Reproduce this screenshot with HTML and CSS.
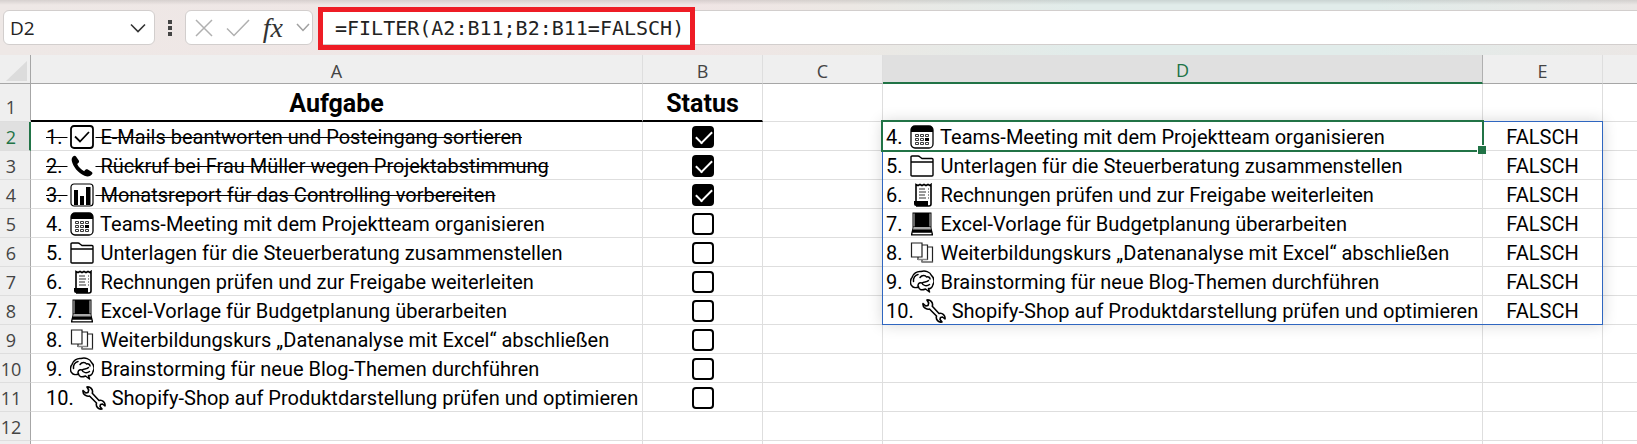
FILE: index.html
```
<!DOCTYPE html>
<html lang="de">
<head>
    <meta charset="UTF-8">
    <meta name="viewport" content="width=device-width, initial-scale=1.0">
    <title>Aufgabenliste mit FILTER</title>
    <link rel="stylesheet" href="styles.css">
</head>
<body>
    <!-- Icons für die Aufgaben -->
    <svg class="sprite" aria-hidden="true">
        <symbol id="i-check" viewBox="0 0 24 24">
            <rect x="1" y="1" width="22" height="22" rx="3" fill="none" stroke="#000" stroke-width="1.8"/>
            <path d="M5 11.500l5 5L19 7" fill="none" stroke="#000" stroke-width="1.8"/>
        </symbol>
        <symbol id="i-phone" viewBox="0 0 24 24">
            <path d="M3 2.500C4 1.500 5.500 1.500 6 2.500L8.800 6.500C9.500 7.700 9 8.500 7.200 10C8.500 13 11 15.500 14.200 17.200C15.500 15.300 16.500 15 17.800 15.600L21.500 17.800C22.800 18.600 22.700 19.600 21.800 20.600C20 22.600 17.500 23 14.500 21.700C8 19 3 12.500 1.800 7C1.500 5 1.800 3.600 3 2.500Z"/>
        </symbol>
        <symbol id="i-chart" viewBox="0 0 24 24">
            <rect x="1" y="1" width="22" height="22" rx="3" fill="none" stroke="#000" stroke-width="1.2"/>
            <path d="M4 7h4v15H4zM10 13h4v9h-4zM16 4h4.500v18H16z"/>
        </symbol>
        <symbol id="i-calendar" viewBox="0 0 24 24">
            <rect x="1" y="1" width="22" height="22" rx="4" fill="#fff" stroke="#000" stroke-width="1.3"/>
            <path d="M1 7V5a4 4 0 0 1 4-4h14a4 4 0 0 1 4 4v2z"/>
            <path d="M5.500 9.500h3v2h-3zM10.500 9.500h3v2h-3zM15.500 9.500h3v2h-3zM5.500 13.500h3v2h-3zM10.500 13.500h3v2h-3zM5.500 17.500h3v2h-3zM10.500 17.500h3v2h-3zM15.500 17.500h3v2h-3z" fill="none" stroke="#222" stroke-width=".9"/>
            <path d="M15 13h4v3h-4z"/>
        </symbol>
        <symbol id="i-folder" viewBox="0 0 24 24">
            <path d="M1 21V3q0-1 1-1h6q1 0 2 1l2 1.500h10q1 0 1 1V21q0 1-1 1H2q-1 0-1-1zM1 8h22" fill="none" stroke="#000" stroke-width="1.400"/>
        </symbol>
        <symbol id="i-receipt" viewBox="0 0 24 24">
            <path d="M6 19V1.500l2 1 2-1 2 1 2-1 2 1 2-1 2 1 1-1V21q0 2-2 2H6" fill="#fff" stroke="#000" stroke-width="1.600"/>
            <path d="M4 18h14v5H6q-2 0-2-2z"/>
            <path d="M9 6h6M9 9h7M9 12h6M9 15h7M18 6h1M18 9h1M18 12h1M18 15h1" stroke="#333" stroke-width="1.200"/>
        </symbol>
        <symbol id="i-laptop" viewBox="0 0 24 24">
            <path d="M2.500.500h19V16l1.500 6v1.500H1V22l1.500-6z"/>
            <path d="M3.600 1.500h.8v13h-.8zM19.600 1.500h.8v13h-.8z" fill="#fff"/>
            <path d="M3.500 15h17l.5 2.500H3z" fill="#aaa"/>
            <path d="M2.500 21.500h19" stroke="#fff" stroke-width="1.500"/>
        </symbol>
        <symbol id="i-pages" viewBox="0 0 24 24">
            <g fill="#fff" stroke="#222" stroke-width="1.200">
                <path d="M12 6h10.500v15H12z"/>
                <path d="M8 4h9.500v14.500H8z"/>
                <path d="M1.500 2h10.500v14H1.500z"/>
            </g>
            <path d="M12 21h10.500M8 18.500h9.500" stroke="#888" stroke-width="1.500"/>
        </symbol>
        <symbol id="i-brain" viewBox="0 0 24 24">
            <g fill="none" stroke="#000" stroke-width="1.500" stroke-linecap="round" stroke-linejoin="round">
                <path d="M2 16C-.5 14 .5 9 2 7.500C3 3.500 7 1 11 1.500C15 .5 20 1.500 21.500 5.500C24.500 8.500 24.500 12 23 14.500C22.500 17.500 20 19 18.500 18.500L19.500 22L15.500 19C12 20.500 9 20 8.500 17C6 18 3 17.500 2 16Z"/>
                <path d="M3.500 11.500C3 8 5 5 8 4.500M8.500 17C7 14.500 9 12 12 13C14 11.500 17 12.500 18.500 10.500M12 13C13 16 17 16.500 19.500 14.500M10 7.500C12 4.500 15.500 5 16.500 7C18.500 6.500 20 7.500 20 9"/>
            </g>
        </symbol>
        <symbol id="i-wrench" viewBox="0 0 24 24">
            <path d="M5 1C8 .5 11.500 3 10.300 7.300L17 14.500C20.500 13.500 23.500 16.500 23 20L20.500 18L18.500 18.500L18 20.500L20 23C16.500 23.800 13.500 20.500 14.500 17L7.500 10C4 11 .5 8 1 4.500L3.800 7L6 6.500L6.700 4z" fill="none" stroke="#000" stroke-width="1.600" stroke-linejoin="round"/>
        </symbol>
    </svg>

    <header class="formula-bar">
        <div class="name-box">
            <input type="text" class="name-input" value="D2" aria-label="Namenfeld">
            <button type="button" class="icon-btn" aria-label="Namen anzeigen">
                <svg width="16" height="10" viewBox="0 0 16 10"><path d="M1 1.500l7 7 7-7" fill="none" stroke="#333" stroke-width="1.600"/></svg>
            </button>
        </div>
        <svg class="dots" width="4" height="16" viewBox="0 0 4 16"><path d="M0 0h4v4H0zM0 6h4v4H0zM0 12h4v4H0z" fill="#444"/></svg>
        <div class="tools">
            <button type="button" class="icon-btn" aria-label="Abbrechen">
                <svg width="18" height="18" viewBox="0 0 18 18"><path d="M1 1l16 16M17 1L1 17" stroke="#b0b0b0" stroke-width="1.500"/></svg>
            </button>
            <button type="button" class="icon-btn" aria-label="Eingeben">
                <svg width="24" height="18" viewBox="0 0 24 18"><path d="M1 9.500l7 7L23 1" fill="none" stroke="#b0b0b0" stroke-width="1.500"/></svg>
            </button>
            <button type="button" class="icon-btn fx" aria-label="Funktion einfügen">fx</button>
            <button type="button" class="icon-btn" aria-label="Weitere Funktionen">
                <svg width="14" height="9" viewBox="0 0 14 9"><path d="M1 1l6 6.500L13 1" fill="none" stroke="#a0a0a0" stroke-width="1.500"/></svg>
            </button>
        </div>
        <div class="formula">
            <input type="text" class="formula-input" value="=FILTER(A2:B11;B2:B11=FALSCH)" aria-label="Bearbeitungsleiste">
            <span class="marker"></span>
        </div>
    </header>

    <main class="sheet">
        <table class="grid">
            <colgroup>
                <col class="col-num"><col class="col-a"><col class="col-s"><col class="col-s"><col class="col-d"><col class="col-s"><col>
            </colgroup>
            <thead>
                <tr>
                    <th class="corner"><svg width="21" height="20" viewBox="0 0 21 20"><path d="M21 0v20H0z" fill="#dcdcdc"/></svg></th>
                    <th>A</th><th>B</th><th>C</th><th class="active">D</th><th>E</th><th></th>
                </tr>
            </thead>
            <tbody>
                <tr class="titles">
                    <th>1</th><td class="title">Aufgabe</td><td class="title">Status</td><td></td><td></td><td></td><td></td>
                </tr>
                <tr>
                    <th class="active">2</th>
                    <td class="task done">1. <svg class="icon"><use href="#i-check"/></svg> E-Mails beantworten und Posteingang sortieren</td>
                    <td class="center"><input type="checkbox" aria-label="Aufgabe 1" checked></td>
                    <td></td>
                    <td class="result selected">4. <svg class="icon"><use href="#i-calendar"/></svg> Teams-Meeting mit dem Projektteam organisieren<span class="spill"></span><span class="cursor"></span></td>
                    <td class="center">FALSCH</td><td></td>
                </tr>
                <tr>
                    <th>3</th>
                    <td class="task done">2. <svg class="icon"><use href="#i-phone"/></svg> Rückruf bei Frau Müller wegen Projektabstimmung</td>
                    <td class="center"><input type="checkbox" aria-label="Aufgabe 2" checked></td>
                    <td></td>
                    <td class="result">5. <svg class="icon"><use href="#i-folder"/></svg> Unterlagen für die Steuerberatung zusammenstellen</td>
                    <td class="center">FALSCH</td><td></td>
                </tr>
                <tr>
                    <th>4</th>
                    <td class="task done">3. <svg class="icon"><use href="#i-chart"/></svg> Monatsreport für das Controlling vorbereiten</td>
                    <td class="center"><input type="checkbox" aria-label="Aufgabe 3" checked></td>
                    <td></td>
                    <td class="result">6. <svg class="icon"><use href="#i-receipt"/></svg> Rechnungen prüfen und zur Freigabe weiterleiten</td>
                    <td class="center">FALSCH</td><td></td>
                </tr>
                <tr>
                    <th>5</th>
                    <td class="task">4. <svg class="icon"><use href="#i-calendar"/></svg> Teams-Meeting mit dem Projektteam organisieren</td>
                    <td class="center"><input type="checkbox" aria-label="Aufgabe 4"></td>
                    <td></td>
                    <td class="result">7. <svg class="icon"><use href="#i-laptop"/></svg> Excel-Vorlage für Budgetplanung überarbeiten</td>
                    <td class="center">FALSCH</td><td></td>
                </tr>
                <tr>
                    <th>6</th>
                    <td class="task">5. <svg class="icon"><use href="#i-folder"/></svg> Unterlagen für die Steuerberatung zusammenstellen</td>
                    <td class="center"><input type="checkbox" aria-label="Aufgabe 5"></td>
                    <td></td>
                    <td class="result">8. <svg class="icon"><use href="#i-pages"/></svg> Weiterbildungskurs „Datenanalyse mit Excel“ abschließen</td>
                    <td class="center">FALSCH</td><td></td>
                </tr>
                <tr>
                    <th>7</th>
                    <td class="task">6. <svg class="icon"><use href="#i-receipt"/></svg> Rechnungen prüfen und zur Freigabe weiterleiten</td>
                    <td class="center"><input type="checkbox" aria-label="Aufgabe 6"></td>
                    <td></td>
                    <td class="result">9. <svg class="icon"><use href="#i-brain"/></svg> Brainstorming für neue Blog-Themen durchführen</td>
                    <td class="center">FALSCH</td><td></td>
                </tr>
                <tr>
                    <th>8</th>
                    <td class="task">7. <svg class="icon"><use href="#i-laptop"/></svg> Excel-Vorlage für Budgetplanung überarbeiten</td>
                    <td class="center"><input type="checkbox" aria-label="Aufgabe 7"></td>
                    <td></td>
                    <td class="result">10. <svg class="icon"><use href="#i-wrench"/></svg> Shopify-Shop auf Produktdarstellung prüfen und optimieren</td>
                    <td class="center">FALSCH</td><td></td>
                </tr>
                <tr>
                    <th>9</th>
                    <td class="task">8. <svg class="icon"><use href="#i-pages"/></svg> Weiterbildungskurs „Datenanalyse mit Excel“ abschließen</td>
                    <td class="center"><input type="checkbox" aria-label="Aufgabe 8"></td>
                    <td></td><td></td><td></td><td></td>
                </tr>
                <tr>
                    <th>10</th>
                    <td class="task">9. <svg class="icon"><use href="#i-brain"/></svg> Brainstorming für neue Blog-Themen durchführen</td>
                    <td class="center"><input type="checkbox" aria-label="Aufgabe 9"></td>
                    <td></td><td></td><td></td><td></td>
                </tr>
                <tr>
                    <th>11</th>
                    <td class="task">10. <svg class="icon"><use href="#i-wrench"/></svg> Shopify-Shop auf Produktdarstellung prüfen und optimieren</td>
                    <td class="center"><input type="checkbox" aria-label="Aufgabe 10"></td>
                    <td></td><td></td><td></td><td></td>
                </tr>
                <tr><th>12</th><td></td><td></td><td></td><td></td><td></td><td></td></tr>
                <tr><th></th><td></td><td></td><td></td><td></td><td></td><td></td></tr>
            </tbody>
        </table>
    </main>
</body>
</html>
```
FILE: styles.css
```
* {
    box-sizing: border-box;
}
body {
    margin: 0;
    height: 100vh;
    display: flex;
    flex-direction: column;
    overflow: hidden;
    background: #fff;
    color: #000;
    font-family: Roboto, "Liberation Sans", sans-serif;
    font-size: 20px;
}
.sprite {
    display: none;
}

/* Bearbeitungsleiste */
.formula-bar {
    flex: none;
    display: flex;
    align-items: center;
    height: 55px;
    padding-left: 3px;
    background: linear-gradient(rgba(0,0,0,0.1), rgba(0,0,0,0) 5px), linear-gradient(90deg, #eee8e6 0%, #f0e5e5 42%, #ece8e4 52%, #e1ecea 66%, #e1ecea 84%, #ebe7e5 100%);
}
.name-box,
.tools {
    display: flex;
    align-items: center;
    height: 35px;
    background: #fff;
    border: 1px solid #d2cecd;
    border-radius: 6px;
}
.name-box {
    width: 152px;
    padding-right: 8px;
}
.name-input {
    flex: 1;
    min-width: 0;
    padding: 0 0 0 6px;
    border: none;
    outline: none;
    background: none;
    color: #222;
    font: 19px "Open Sans", sans-serif;
}
.icon-btn {
    display: flex;
    padding: 0;
    border: none;
    background: none;
    cursor: pointer;
}
.dots {
    margin: 0 13px;
}
.tools {
    width: 128px;
    justify-content: space-between;
    padding: 0 2px 0 9px;
}
.fx {
    color: #333;
    font: italic 28px/30px "Liberation Serif", serif;
}
.formula {
    position: relative;
    flex: 1;
    margin-left: 5px;
}
.formula-input {
    display: block;
    width: 100%;
    height: 35px;
    padding: 0 0 0 17px;
    border: 1px solid #d2cecd;
    border-width: 1px 0;
    outline: none;
    background: #fff;
    color: #222;
    font: 20px "DejaVu Sans Mono", monospace;
}
.marker {
    position: absolute;
    top: -3px;
    left: 0;
    width: 377px;
    height: 43px;
    border: 5px solid #ee1c25;
    pointer-events: none;
}

/* Tabelle */
.sheet {
    flex: 1;
    min-height: 0;
    overflow: hidden;
}
.grid {
    width: 100%;
    table-layout: fixed;
    border-collapse: separate;
    border-spacing: 0;
}
.col-num {
    width: 31px;
}
.col-a {
    width: 612px;
}
.col-s {
    width: 120px;
}
.col-d {
    width: 600px;
}
.grid th,
.grid td {
    height: 29px;
    padding: 2px 0 0;
    border-right: 1px solid #dedede;
    border-bottom: 1px solid #dedede;
    line-height: 24px;
    white-space: nowrap;
}
.grid th {
    background: #efefef;
    color: #444;
    font-family: "Open Sans", sans-serif;
    font-size: 18px;
    font-weight: normal;
}
.grid thead th {
    padding-top: 3px;
    border-bottom-color: #a6a6a6;
}
.grid thead .corner {
    padding: 4px 3px 0 0;
    text-align: right;
    border-right-color: #a6a6a6;
}
.corner svg {
    display: block;
    margin-left: auto;
}
.grid thead .active {
    border-bottom: 2px solid #217346;
    border-right-color: #b0b0b0;
}
.grid tbody th {
    padding-right: 8px;
    border-right-color: #a6a6a6;
}
.grid .active {
    background: #e0e0e0;
    color: #217346;
}
.grid tbody .active {
    padding-right: 7px;
    border-right: 2px solid #217346;
}
.grid tr > :last-child {
    border-right: none;
}
.grid .titles th,
.grid .titles td {
    height: 38px;
    padding-top: 4px;
}
.grid .titles th {
    padding-top: 8px;
}
.grid .title {
    border-bottom: 2px solid #000;
    font-size: 25px;
    font-weight: bold;
    text-align: center;
}
.grid .task {
    padding-left: 15px;
}
.grid .result {
    padding-left: 3px;
}
.grid .center {
    padding-top: 1px;
    text-align: center;
}
.done {
    text-decoration: line-through 1px;
}
.icon {
    width: 24px;
    height: 24px;
    margin: 0 1px 0 3px;
    vertical-align: -5px;
}
input[type="checkbox"] {
    appearance: none;
    display: block;
    position: relative;
    width: 22px;
    height: 22px;
    margin: 0 auto;
    border: 2px solid #000;
    border-radius: 4px;
    background: #fff;
}
input[type="checkbox"]:checked {
    background: #000;
}
input[type="checkbox"]:checked::after {
    content: "";
    position: absolute;
    top: 3px;
    left: 2px;
    width: 14px;
    height: 7px;
    border: solid #fff;
    border-width: 0 0 2px 2px;
    transform: rotate(-45deg);
}

/* Überlaufbereich D2:E8 und Zellcursor */
.selected {
    position: relative;
}
.spill {
    position: absolute;
    top: -1px;
    left: -1px;
    width: calc(120% + 2px);
    height: calc(700% + 8px);
    border: 1px solid #2f66c0;
    box-shadow: 0 0 14px rgba(0,0,0,0.16);
    pointer-events: none;
}
.cursor {
    position: absolute;
    top: -2px;
    left: -2px;
    right: -2px;
    bottom: -2px;
    border: 2px solid #217346;
    pointer-events: none;
}
.cursor::after {
    content: "";
    position: absolute;
    right: -4px;
    bottom: -4px;
    width: 8px;
    height: 8px;
    border: solid #fff;
    border-width: 1px 0 0 1px;
    background: #217346;
}
```
